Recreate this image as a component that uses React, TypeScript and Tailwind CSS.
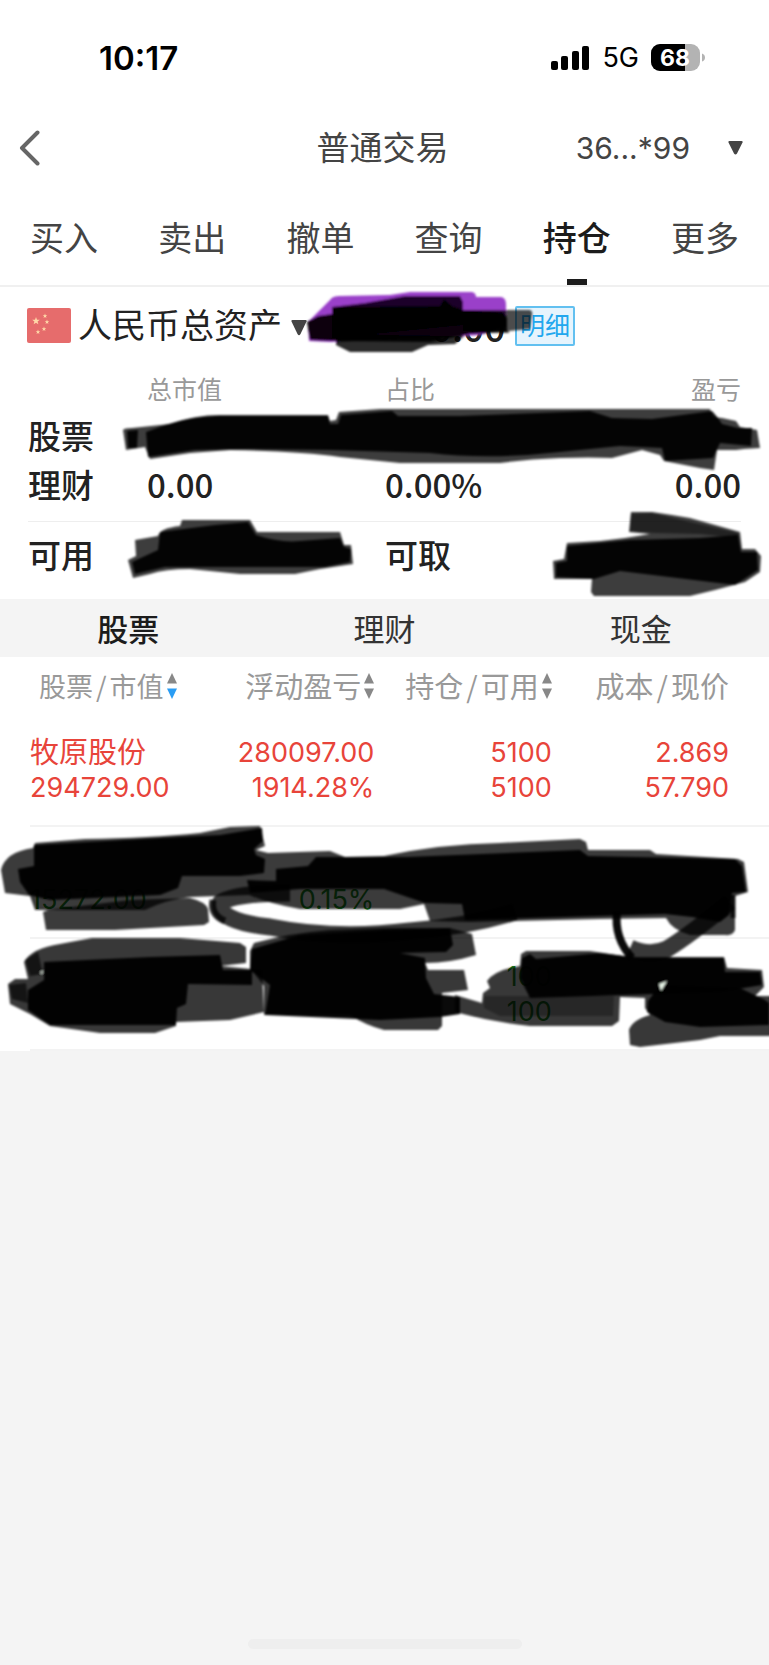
import type { ReactNode } from "react";

const TABS = ["买入", "卖出", "撤单", "查询", "持仓", "更多"];
const SECTIONS = ["股票", "理财", "现金"];

type Holding = { cells: [string, string][]; tone: string };

const HOLDINGS: Holding[] = [
  {
    tone: "text-[#e8443a]",
    cells: [
      ["牧原股份", "294729.00"],
      ["280097.00", "1914.28%"],
      ["5100", "5100"],
      ["2.869", "57.790"],
    ],
  },
  {
    tone: "text-[#1c8a24]",
    cells: [["", "15272.00"], ["", "0.15%"], ["", ""], ["", ""]],
  },
  {
    tone: "text-[#1c8a24]",
    cells: [["", ""], ["", ""], ["100", "100"], ["", ""]],
  },
];

const CJK = "font-['Noto_Sans_CJK_SC',sans-serif]";
const NUM = "font-[Inter,'Noto_Sans_CJK_SC',sans-serif]";

function StatusBar() {
  return (
    <div className="flex h-[110px] items-center justify-between pt-[6px] pr-[64px] pl-[99px] font-[Inter,sans-serif] text-black">
      <span className="text-[33px] leading-10 font-semibold">10:17</span>
      <div className="flex items-center gap-[12px]">
        <svg width="39" height="26" viewBox="0 0 39 26" aria-hidden="true">
          <rect x="0" y="16" width="7" height="9" rx="2" />
          <rect x="10" y="11" width="7" height="14" rx="2" />
          <rect x="21" y="6" width="7" height="19" rx="2" />
          <rect x="31" y="1" width="7" height="24" rx="2" />
        </svg>
        <span className="text-[27px] leading-8">5G</span>
        <svg width="54" height="28" viewBox="0 0 54 28" role="img" aria-label="68%">
          <clipPath id="cell">
            <rect x="0" y="0" width="49" height="27" rx="9" />
          </clipPath>
          <g clipPath="url(#cell)">
            <rect width="49" height="27" fill="#b3b3b3" />
            <rect width="34" height="27" fill="#000" />
          </g>
          <path d="M51 9.5q3 1 3 4t-3 4z" fill="#b3b3b3" />
          <text x="24" y="22" textAnchor="middle" fontSize="23" fontWeight="700" fill="#fff">
            68
          </text>
        </svg>
      </div>
    </div>
  );
}

function Header() {
  return (
    <header className="grid h-[76px] grid-cols-3 items-center pr-[26px] pl-[18px] text-[#444]">
      <button aria-label="返回" className="justify-self-start">
        <svg width="24" height="36" viewBox="0 0 24 36" fill="none" stroke="#666" strokeWidth="4" strokeLinecap="round" strokeLinejoin="round">
          <path d="M19.500 2.500L4 18l15.500 15.500" />
        </svg>
      </button>
      <h1 className={`${CJK} pb-1 pl-1 text-center text-[33px] leading-10`}>普通交易</h1>
      <button className={`${NUM} flex items-center gap-[38px] justify-self-end text-[30px] leading-10`}>
        36...*99
        <svg width="15" height="14" viewBox="0 0 15 14" fill="#444" aria-hidden="true">
          <path d="M1.500 0h12q1.500 0 1 1.500L9 12.500q-1.500 2-3 0L.5 1.500Q0 0 1.500 0z" />
        </svg>
      </button>
    </header>
  );
}

function Tabs() {
  return (
    <nav className="flex h-[101px] border-b-2 border-[#f0f0f0]">
      {TABS.map((t) => {
        const on = t === "持仓";
        return (
          <button
            key={t}
            aria-current={on ? "page" : undefined}
            className={`flex flex-1 flex-col items-center justify-between pt-[26px] text-[34px] leading-[50px] ${on ? "font-medium text-[#1c1c1c]" : "text-[#444]"}`}
          >
            {t}
            <span className={`h-[6px] w-5 ${on ? "bg-[#1c1c1c]" : ""}`} />
          </button>
        );
      })}
    </nav>
  );
}

function Star({ x, y, r }: { x: number; y: number; r: number }) {
  return (
    <path
      transform={`translate(${x} ${y}) scale(${r})`}
      d="M0-1L.25-.33.95-.31.4.13.59.81 0 .41-.59.81-.4.13-.95-.31-.25-.33z"
      fill="#ffd9a8"
    />
  );
}

function Assets() {
  return (
    <section className="text-[#222]">
      <div className="flex h-[78px] items-center pl-[27px]">
        <svg width="44" height="36" viewBox="0 0 44 36" aria-hidden="true">
          <rect x="0" y="0" width="44" height="35" rx="2" fill="#e66c6c" />
          <Star x={9} y={13} r={4} />
          <Star x={18} y={8} r={2.4} />
          <Star x={20} y={14} r={2.4} />
          <Star x={17} y={21} r={2.4} />
          <Star x={11} y={24} r={2.4} />
        </svg>
        <button className="ml-[7px] flex items-center gap-[9px] text-[34px] leading-10">
          <span className="pb-1">人民币总资产</span>
          <svg width="16" height="16" viewBox="0 0 16 16" fill="#444" className="mt-1" aria-hidden="true">
            <path d="M1.500 0h13q1.500 0 1 1.500L9.500 14q-1.500 2.500-3 0L.5 1.500Q0 0 1.500 0z" />
          </svg>
        </button>
        <span className="ml-[124px] w-[84px] text-[37px] leading-10 font-medium">0.00</span>
        <button className="h-10 w-[60px] rounded-[2px] border-2 border-[#62c0f0] bg-[#e6f4fd] pb-1 text-[25px] leading-8 text-[#22a7ee]">
          明细
        </button>
      </div>

      <div className="px-[28px]">
        <table className="w-full table-fixed text-[33px] leading-[49px]">
          <colgroup>
            <col className="w-[119px]" />
            <col className="w-[238px]" />
            <col />
          </colgroup>
          <thead className="text-[25px] leading-[46px] text-[#999]">
            <tr>
              <td />
              <th className="text-left font-normal">总市值</th>
              <th className="text-left font-normal">占比</th>
              <th className="text-right font-normal">盈亏</th>
            </tr>
          </thead>
          <tbody>
            <tr>
              <th className="text-left font-medium">股票</th>
              <td />
              <td />
              <td />
            </tr>
            <tr className="font-medium">
              <th className="text-left font-medium">理财</th>
              <td>0.00</td>
              <td>0.00%</td>
              <td className="text-right">0.00</td>
            </tr>
          </tbody>
        </table>
        <div className="mt-[12px] flex h-[78px] border-t border-[#eee] pt-[8px] text-[33px] leading-[49px] font-medium">
          <span className="w-[357px]">可用</span>
          <span>可取</span>
        </div>
      </div>
    </section>
  );
}

function SortIcon({ down }: { down: string }) {
  return (
    <svg width="10" height="26" viewBox="0 0 10 26" className="shrink-0" aria-hidden="true">
      <path d="M5 0l5 10.500h-10z" fill="#888" />
      <path d="M5 26l5-10.500h-10z" fill={down} />
    </svg>
  );
}

function Head({ children, sort, first }: { children: ReactNode; sort?: string; first?: boolean }) {
  return (
    <th className="p-0 font-normal">
      <button
        className={`flex w-full items-center gap-[3px] whitespace-nowrap ${first ? "pl-[9px] text-[27px]" : "justify-end text-[29px]"} ${sort ? "" : "pr-[40px]"}`}
      >
        <span>{children}</span>
        {sort && <SortIcon down={sort} />}
      </button>
    </th>
  );
}

function Slash() {
  return <span className="mx-[3px]">/</span>;
}

function Holdings() {
  return (
    <section className="bg-white pl-[30px]">
      <table className="w-full table-fixed border-separate border-spacing-0">
        <colgroup>
          <col className="w-[22.6%]" />
          <col className="w-[24%]" />
          <col className="w-[24%]" />
          <col />
        </colgroup>
        <thead className="h-[58px] text-[#999]">
          <tr>
            <Head first sort="#2a9df4">
              股票<Slash />市值
            </Head>
            <Head sort="#888">浮动盈亏</Head>
            <Head sort="#888">
              持仓<Slash />可用
            </Head>
            <Head>
              成本<Slash />现价
            </Head>
          </tr>
        </thead>
        <tbody>
          {HOLDINGS.map((h, i) => (
            <tr key={i} className={`${NUM} ${h.tone} text-[27px] leading-[35px]`}>
              {h.cells.map(([a, b], c) => (
                <td
                  key={c}
                  className={`h-[112px] border-b-2 border-[#f3f3f3] p-0 ${c === 0 ? "text-left" : "text-right"} ${c === 3 ? "pr-[40px]" : ""}`}
                >
                  <div className={c === 0 ? "h-[35px] text-[29px]" : "h-[35px]"}>{a}</div>
                  <div className="h-[35px]">{b}</div>
                </td>
              ))}
            </tr>
          ))}
        </tbody>
      </table>
    </section>
  );
}

function Marker() {
  return (
    <svg viewBox="0 0 769 1665" className="pointer-events-none absolute inset-x-0 top-0 w-full" aria-hidden="true">
      <defs>
        <filter id="soft" x="-5%" y="-5%" width="110%" height="110%">
          <feGaussianBlur stdDeviation="1" />
        </filter>
      </defs>
      <g filter="url(#soft)" strokeLinejoin="round">
        {/* total assets */}
        <path d="M308 322L330 300Q332 296 340 296L390 295 410 292H472Q476 293 476 297H501Q506 298 506 304V327L480 335 430 338 330 342 309 341z" fill="#9a3fc9" />
        <path d="M332 307L365 303 405 296H460L463 302V325L332 338z" fill="#1f062a" />
        <path d="M332 307L440 306 444 299 452 306 463 310 503 312 507 318V332L470 334 430 342 336 341 310 340 307 322 318 316 332 314z" fill="#000" fillOpacity=".94" />
        <path d="M336 335V345L350 352H412L428 345 455 344 464 336z" fill="#000" fillOpacity=".83" />
        <path d="M463 310H530Q533 311 532 315L530 329 509 331V333L490 332 463 331z" fill="#000" fillOpacity=".7" />

        {/* stock row */}
        <g fill="#000" fillOpacity=".76">
          <path d="M123 430Q124 428 132 428L170 424Q195 415 220 415H328L330 421 336 420 339 412 380 409H710L713 417 722 418 736 421 740 427 757 430 760 448 744 449 736 450H717L714 470 700 468 664 461 660 455 642 450 612 458Q590 457 560 458T500 463H400L340 457Q300 451 230 450L190 453 150 459 145 447 126 450z" />
          <path d="M135 540L158 536Q160 528 180 526L182 520H250L257 532H340L344 545H351L353 564 320 569 295 574H240L190 569Q165 569 150 574L133 578 128 560 136 556z" />
          <path d="M631 512H652L672 515 690 518 740 532 742 549H755L761 556 760 572 745 582 715 590 690 596H594L591 592 592 579H554L553 561 564 559 567 543 600 541 625 538 650 534 629 532z" />
        </g>
        <g fill="#000" fillOpacity=".93">
          <path d="M127 431L138 430 137 448 128 448zM146 432L165 425Q190 417 215 416H328L330 424H338L341 415 392 411 398 416H460L590 411 612 418 652 419 712 411 718 418 722 424 738 428 752 428 751 446 720 443 713 458 665 461 662 448 620 446 560 452Q490 460 430 453L330 450 250 449 195 450 148 457z" />
          <path d="M160 532L215 525 248 522 256 535Q280 543 300 541L340 538 344 547 351 549 350 562 325 567 165 567 135 574 132 562 158 550z" />
          <path d="M567 546L630 540 700 538 738 535 741 552H757L758 570 735 585 620 571 594 579 556 577V563L567 561z" />
          <path d="M631 514L652 513 738 533 739 538 700 534 655 533 630 531z" fillOpacity=".45" />
        </g>

        {/* first covered holding */}
        <g fill="#000" fillOpacity=".77">
          <path d="M1 870Q5 852 33 848L35 843 85 839Q150 838 200 833L230 827 260 826 265 846 256 850 268 853 330 851 345 857 384 856Q440 844 500 843L580 839 586 842 588 850H650L656 854 738 859 744 862 748 892 735 896V930Q733 936 725 935H690Q672 930 666 918L600 919 470 922 430 921 424 904 400 909H300Q270 904 249 895L190 897Q165 900 145 910H35L30 896 5 893z" />
          <path d="M43 912L48 910 130 900 190 898Q206 902 208 909L209 922 204 925 115 930H46z" />
        </g>
        <g fill="none" stroke="#000" strokeOpacity=".78">
          <path d="M290 893Q235 893 220 903Q217 921 270 927Q335 940 410 931Q465 927 515 912" strokeWidth="17" />
          <path d="M617 912Q614 938 632 958" strokeWidth="8" strokeOpacity=".96" />
          <path d="M630 948Q650 957 667 949Q690 935 730 902" strokeWidth="17" />
          <path d="M733 895V918" strokeWidth="5" />
          <path d="M213 900Q210 915 225 921" strokeWidth="7" />
        </g>
        <g fill="#000" fillOpacity=".97">
          <path d="M34 845L160 838 220 835 262 828 263 841 254 849 256 855 265 859 264 873 240 876H182L178 888 160 895 50 900 29 895 20 882 18 869 34 866z" />
          <path d="M276 869L308 866 316 857H384L407 857 580 850 588 856 735 859 742 866 746 892 732 893 729 915 720 922 692 917 665 914 465 920 462 904 425 903 384 889H300L250 893 247 880 276 881z" />
        </g>

        {/* second covered holding */}
        <g fill="#000" fillOpacity=".78">
          <path d="M24 962Q32 948 60 944L92 938H180L240 943 246 947V963L220 966 262 970 264 1012 230 1020 176 1022V1026L155 1033H100L50 1026 30 1014 10 1004 8 984 15 979 28 979z" />
          <path d="M250 951L254 943Q290 933 330 930L384 928 450 928 472 934 476 955Q450 963 425 963L428 970H464L468 990 442 993 442 1026 438 1030H384Q365 1025 350 1015H264V986L250 968z" />
          <path d="M487 981Q495 970 520 966L521 954 526 951H590L630 957H724L727 968 762 970 764 987 755 996H775V1036H720L700 1040 640 1047 630 1045 629 1030Q632 1020 650 1015L645 1008V998L620 997 619 1021 612 1026H530Q492 1022 455 1012V995L482 1003 483 993 490 988z" />
        </g>
        <g fill="#000" fillOpacity=".96">
          <path d="M44 962L150 957 220 955 223 970H252V985L188 984 186 1004 177 1008 176 1025H50L28 1010V990L44 980z" />
          <path d="M9 985L26 983 28 1003 12 999zM25 960L38 952 43 974 30 976z" fillOpacity=".65" />
          <path d="M252 949L300 935 384 930 450 928 453 945 446 952 400 953 425 958 426 978 434 994 460 997V1014L440 1017 380 1020 265 1015 270 985 250 970z" />
          <path d="M536 959L600 953 640 958H724L725 972H760L762 985 720 992 655 994 530 998 520 978 522 958 530 954z" />
          <path d="M660 985L740 988 765 1000 769 1003V1025L700 1027 665 1022 647 1012 648 1001z" />
          <path d="M484 996H614L613 1016H500L484 1008z" fillOpacity=".3" />
        </g>
        <path d="M40 972l3-1-1 3zM659 984l8-3-6 10z" fill="#e8f5e8" />
      </g>
    </svg>
  );
}

export default function App() {
  return (
    <div className={`${CJK} relative flex min-h-screen flex-col bg-[#f4f4f4]`}>
      <div className="bg-white">
        <StatusBar />
        <Header />
        <Tabs />
        <Assets />
      </div>
      <div className="grid h-[58px] grid-cols-3 text-[31px] text-[#333]">
        {SECTIONS.map((s, i) => (
          <button key={s} className={i === 0 ? "font-medium text-[#1c1c1c]" : ""}>
            {s}
          </button>
        ))}
      </div>
      <Holdings />
      <Marker />
      <div className="mt-auto flex justify-center pb-4">
        <div className="h-[10px] w-[274px] rounded-full bg-[#eee]" />
      </div>
    </div>
  );
}
